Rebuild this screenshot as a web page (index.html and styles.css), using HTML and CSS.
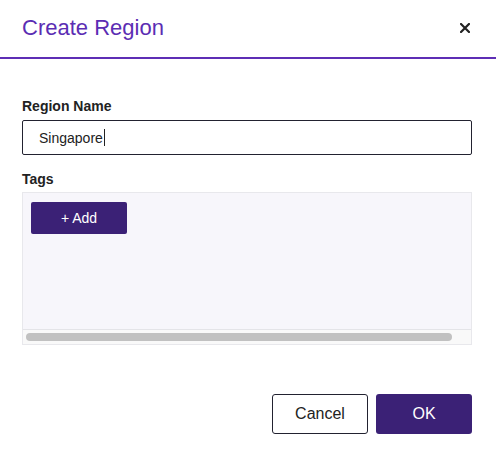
FILE: index.html
```html
<!DOCTYPE html>
<html>
<head>
<meta charset="utf-8">
<link rel="stylesheet" href="styles.css">
</head>
<body>
<div class="dialog">
  <div class="header">
    <h1 class="title">Create Region</h1>
    <button class="close" aria-label="Close">
      <svg width="10" height="10" viewBox="0 0 10 10"><path d="M1 1 L9 9 M9 1 L1 9" stroke="#222" stroke-width="2.2" stroke-linecap="square"/></svg>
    </button>
  </div>
  <div class="content">
    <label class="label">Region Name</label>
    <div class="input"><span>Singapore</span><span class="caret"></span></div>
    <label class="label tags-label">Tags</label>
    <div class="tags-box">
      <div class="tags-inner">
        <button class="btn-add"><span class="plus">+</span> Add</button>
      </div>
      <div class="scrollbar"><div class="thumb"></div></div>
    </div>
    <div class="footer">
      <button class="btn btn-cancel">Cancel</button>
      <button class="btn btn-ok">OK</button>
    </div>
  </div>
</div>
</body>
</html>
```
FILE: styles.css
```css
* { box-sizing: border-box; }
html, body { margin: 0; padding: 0; background: #fff; }
body { font-family: "Liberation Sans", Arial, sans-serif; color: #222; }
.dialog { width: 496px; height: 457px; }
.header {
  height: 59px;
  display: flex;
  align-items: center;
  justify-content: space-between;
  padding: 0 26px 0 22px;
  border-bottom: 2px solid #5e2eb5;
}
.title {
  margin: 0;
  font-size: 22px;
  line-height: 22px;
  font-weight: normal;
  color: #5b2db3;
  padding-bottom: 1px;
}
.close {
  border: 0;
  background: none;
  padding: 0;
  width: 10px;
  height: 10px;
  display: block;
  margin-top: -2px;
}
.close svg { display: block; }
.content { padding: 39px 24px 0 22px; }
.label {
  display: block;
  font-size: 14px;
  line-height: 16px;
  font-weight: bold;
  color: #222;
}
.input {
  margin-top: 6px;
  height: 35px;
  border: 1px solid #222230;
  border-radius: 2px;
  display: flex;
  align-items: center;
  padding-left: 16px;
  font-size: 14px;
  color: #222;
}
.caret {
  display: inline-block;
  width: 1px;
  height: 17px;
  background: #222;
  margin-left: 1px;
}
.tags-label { margin-top: 16px; }
.tags-box {
  margin-top: 5px;
  border: 1px solid #e8e8ec;
  background: #f7f6fb;
}
.tags-inner {
  height: 136px;
  padding: 9px 8px;
}
.btn-add {
  width: 96px;
  height: 32px;
  border: 0;
  border-radius: 2px;
  background: #3b2176;
  color: #fff;
  font-family: "Liberation Sans", Arial, sans-serif;
  font-size: 14px;
  padding: 0;
  display: block;
}
.plus { font-weight: 300; }
.scrollbar {
  border-top: 1px solid #e4e4e8;
  height: 15px;
  background: #f9f9f9;
  padding: 3px 0 0 3px;
}
.thumb {
  width: 426px;
  height: 8px;
  border-radius: 4px;
  background: #c1c1c1;
}
.footer {
  margin-top: 49px;
  display: flex;
  justify-content: flex-end;
  gap: 8px;
}
.btn {
  width: 96px;
  height: 40px;
  border-radius: 3px;
  font-family: "Liberation Sans", Arial, sans-serif;
  font-size: 16px;
  padding: 0;
}
.btn-cancel {
  background: #fff;
  border: 1px solid #222230;
  color: #222;
}
.btn-ok {
  background: #3b2176;
  border: 0;
  color: #fff;
}
```
